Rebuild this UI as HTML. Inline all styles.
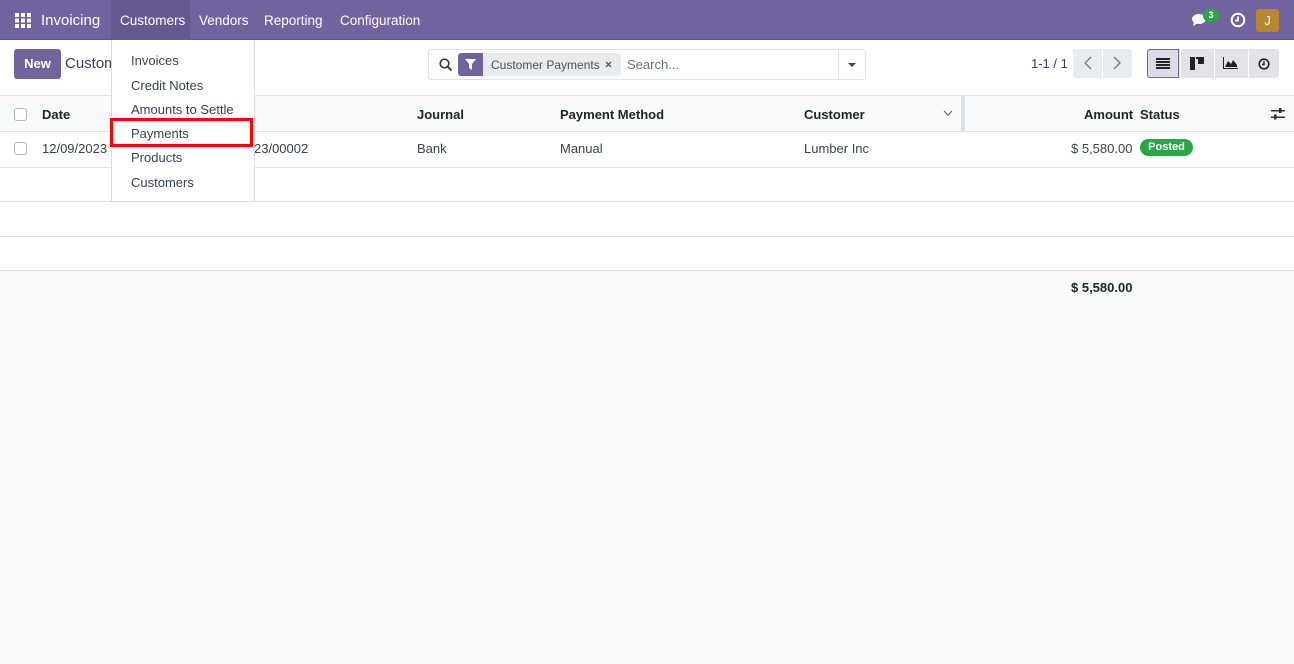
<!DOCTYPE html>
<html><head><meta charset="utf-8"><style>
*{box-sizing:border-box;margin:0;padding:0}
body{width:1294px;height:664px;overflow:hidden;background:#f9fafb;font-family:"Liberation Sans","DejaVu Sans",sans-serif;font-size:13px;color:#374151;position:relative}
.nav{position:absolute;left:0;top:0;width:1294px;height:40px;background:#71639e;color:#fff;border-bottom:1px solid #5f538a}
.nav span{position:absolute;top:13px;font-size:13.5px}
.ctl{position:absolute;top:40px;left:0;width:1294px;height:55px;background:#fff}
.abs{position:absolute}
.row{position:absolute;left:0;width:1294px;background:#fff;border-bottom:1px solid #dee2e6}
.cb{position:absolute;left:14px;width:13px;height:13px;border:1px solid #adb5bd;border-radius:3px;background:#fff}
b{font-weight:bold;color:#212529}
.menu{position:absolute;left:111px;top:40px;width:144px;height:162px;background:#fff;border:1px solid #d8dadd;border-top:none}
.menu div{position:absolute;left:19px;font-size:13px;color:#374151}
</style></head><body>
<div class="nav">
 <svg class="abs" style="left:15px;top:13px" width="16" height="15" viewBox="0 0 16 15" fill="#fff"><rect x="0" y="0" width="4" height="4"/><rect x="6" y="0" width="4" height="4"/><rect x="12" y="0" width="4" height="4"/><rect x="0" y="5.5" width="4" height="4"/><rect x="6" y="5.5" width="4" height="4"/><rect x="12" y="5.5" width="4" height="4"/><rect x="0" y="11" width="4" height="4"/><rect x="6" y="11" width="4" height="4"/><rect x="12" y="11" width="4" height="4"/></svg>
 <span style="left:41px;font-size:15px;top:12px">Invoicing</span>
 <div class="abs" style="left:111px;top:0;width:79px;height:40px;background:#665990"></div>
 <span style="left:120px">Customers</span>
 <span style="left:199px">Vendors</span>
 <span style="left:264px">Reporting</span>
 <span style="left:340px">Configuration</span>
 <svg class="abs" style="left:1192px;top:13px" width="18" height="14" viewBox="0 0 18 14" fill="#fff"><ellipse cx="7" cy="6" rx="7" ry="5"/><path d="M2 9 L1 13 L6 10Z"/></svg>
 <div class="abs" style="left:1203px;top:9px;width:16px;height:13px;border-radius:7px;background:#28a745;font-size:9px;text-align:center;line-height:13px;font-weight:bold">3</div>
 <svg class="abs" style="left:1230px;top:12px" width="16" height="16" viewBox="0 0 16 16"><circle cx="8" cy="8" r="6.3" fill="none" stroke="#fff" stroke-width="2"/><path d="M8 4.5V8.5H5" fill="none" stroke="#fff" stroke-width="1.8"/></svg>
 <div class="abs" style="left:1256px;top:9px;width:23px;height:23px;background:#b8862d;border-radius:3px;text-align:center;line-height:23px;font-size:13px">J</div>
</div>
<div class="ctl">
 <div class="abs" style="left:14px;top:9px;width:47px;height:30px;background:#71639e;border-radius:3px;color:#fff;font-weight:bold;text-align:center;line-height:30px">New</div>
 <div class="abs" style="left:65px;top:15px;font-size:15px;color:#374151">Customer Payments</div>
 <div class="abs" style="left:428px;top:9px;width:438px;height:31px;border:1px solid #dee2e6;border-radius:3px;background:#fff">
  <svg class="abs" style="left:10px;top:8px" width="14" height="14" viewBox="0 0 14 14"><circle cx="5.5" cy="5.5" r="4.3" fill="none" stroke="#333" stroke-width="1.6"/><path d="M8.7 8.7L12.5 12.5" stroke="#333" stroke-width="1.8"/></svg>
  <div class="abs" style="left:29px;top:3px;width:163px;height:23px;background:#e9ecef;border-radius:3px"></div>
  <div class="abs" style="left:29px;top:3px;width:25px;height:23px;background:#71639e;border-radius:3px 0 0 3px"></div>
  <svg class="abs" style="left:36px;top:9px" width="11" height="11" viewBox="0 0 11 11"><path d="M0 0H11L7 5V11L4 9V5Z" fill="#fff"/></svg>
  <div class="abs" style="left:62px;top:8px;font-size:12px;color:#495057">Customer Payments</div>
  <svg class="abs" style="left:176px;top:11px" width="7" height="7" viewBox="0 0 7 7"><path d="M1 1L6 6M6 1L1 6" stroke="#555" stroke-width="1.3"/></svg>
  <div class="abs" style="left:198px;top:7px;font-size:13px;color:#6c757d">Search...</div>
  <div class="abs" style="left:409px;top:0;width:1px;height:29px;background:#dee2e6"></div>
  <div class="abs" style="left:419px;top:13px;border-left:4px solid transparent;border-right:4px solid transparent;border-top:4px solid #444"></div>
 </div>
 <div class="abs" style="left:1031px;top:16px;font-size:13px">1-1 / 1</div>
 <div class="abs" style="left:1073px;top:9px;width:59px;height:29px;background:#e9ecef;border-radius:3px"></div>
 <div class="abs" style="left:1102px;top:9px;width:1px;height:29px;background:#fff"></div>
 <svg class="abs" style="left:1084px;top:16px" width="8" height="14" viewBox="0 0 8 14"><path d="M7 1L1 7L7 13" fill="none" stroke="#777" stroke-width="1.3"/></svg>
 <svg class="abs" style="left:1113px;top:16px" width="8" height="14" viewBox="0 0 8 14"><path d="M1 1L7 7L1 13" fill="none" stroke="#777" stroke-width="1.3"/></svg>
 <div class="abs" style="left:1147px;top:9px;width:132px;height:29px;background:#e1e3e8;border-radius:3px"></div>
 <div class="abs" style="left:1147px;top:9px;width:32px;height:29px;background:#dedbe9;border:1px solid #71639e;border-radius:3px 0 0 3px"></div>
 <div class="abs" style="left:1180px;top:9px;width:1px;height:29px;background:#fff"></div>
 <div class="abs" style="left:1214px;top:9px;width:1px;height:29px;background:#fff"></div>
 <div class="abs" style="left:1248px;top:9px;width:1px;height:29px;background:#fff"></div>
 <svg class="abs" style="left:1156px;top:18px" width="14" height="11" viewBox="0 0 14 11" fill="#222"><rect y="0" width="14" height="2"/><rect y="3" width="14" height="2"/><rect y="6" width="14" height="2"/><rect y="9" width="14" height="2"/></svg>
 <svg class="abs" style="left:1190px;top:17px" width="14" height="13" viewBox="0 0 14 13" fill="#222"><rect x="0" y="0" width="5" height="13"/><rect x="6" y="0" width="8" height="2"/><rect x="8" y="2" width="6" height="5"/></svg>
 <svg class="abs" style="left:1223px;top:17px" width="15" height="12" viewBox="0 0 15 12" fill="#222"><path d="M0 0V12H15V11H1V0Z"/><path d="M2 10L5 4L8 7L10 3L14 8V10Z"/></svg>
 <svg class="abs" style="left:1258px;top:18px" width="12" height="12" viewBox="0 0 12 12"><circle cx="6" cy="6" r="4.8" fill="none" stroke="#222" stroke-width="1.6"/><path d="M6 3V6.5H4" fill="none" stroke="#222" stroke-width="1.4"/></svg>
</div>
<div class="row" style="top:95px;height:37px;background:#f9fafb;border-top:1px solid #dee2e6">
 <div class="cb" style="top:12px"></div>
 <b class="abs" style="left:42px;top:11px">Date</b>
 <b class="abs" style="left:417px;top:11px">Journal</b>
 <b class="abs" style="left:560px;top:11px">Payment Method</b>
 <b class="abs" style="left:804px;top:11px">Customer</b>
 <svg class="abs" style="left:943px;top:14px" width="10" height="6" viewBox="0 0 10 6"><path d="M1 1L5 5L9 1" fill="none" stroke="#666" stroke-width="1.2"/></svg>
 <div class="abs" style="left:961px;top:0;width:4px;height:36px;background:#dee2e6"></div>
 <b class="abs" style="left:1084px;top:11px">Amount</b>
 <b class="abs" style="left:1140px;top:11px">Status</b>
 <svg class="abs" style="left:1271px;top:11px" width="14" height="14" viewBox="0 0 14 14" fill="#333"><rect y="3" width="14" height="1.5"/><rect x="8" y="1" width="2.5" height="5"/><rect y="9.5" width="14" height="1.5"/><rect x="3" y="7.5" width="2.5" height="5"/></svg>
</div>
<div class="row" style="top:132px;height:36px">
 <div class="cb" style="top:10px"></div>
 <div class="abs" style="left:42px;top:9px">12/09/2023</div>
 <div class="abs" style="left:254px;top:9px">23/00002</div>
 <div class="abs" style="left:417px;top:9px">Bank</div>
 <div class="abs" style="left:560px;top:9px">Manual</div>
 <div class="abs" style="left:804px;top:9px">Lumber Inc</div>
 <div class="abs" style="left:1071px;top:9px">$ 5,580.00</div>
 <div class="abs" style="left:1140px;top:7px;width:53px;height:17px;background:#28a745;border-radius:9px;color:#fff;font-size:11px;font-weight:bold;text-align:center;line-height:17px">Posted</div>
</div>
<div class="row" style="top:168px;height:34px"></div>
<div class="row" style="top:202px;height:35px"></div>
<div class="row" style="top:237px;height:34px"></div>
<b class="abs" style="left:1071px;top:280px">$ 5,580.00</b>
<div class="menu">
 <div style="top:13px">Invoices</div>
 <div style="top:38px">Credit Notes</div>
 <div style="top:62px">Amounts to Settle</div>
 <div style="top:86px">Payments</div>
 <div style="top:110px">Products</div>
 <div style="top:135px">Customers</div>
</div>
<div class="abs" style="left:110px;top:118px;width:143px;height:29px;border:3px solid #f00"></div>
</body></html>
